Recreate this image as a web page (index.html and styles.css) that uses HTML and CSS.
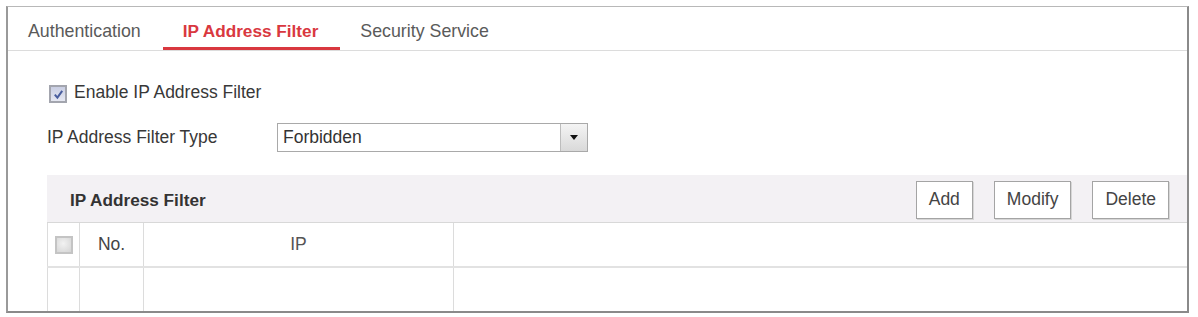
FILE: index.html
```html
<!DOCTYPE html>
<html lang="en">
<head>
    <meta charset="UTF-8">
    <title>IP Address Filter</title>
    <link rel="stylesheet" href="styles.css">
</head>
<body>
    <div class="frame">
        <!-- Tabs -->
        <div class="tabs">
            <span class="tab">Authentication</span>
            <span class="tab active">IP Address Filter</span>
            <span class="tab">Security Service</span>
        </div>

        <div class="content">
            <label class="check-row">
                <span class="check checked">
                    <svg width="11" height="11" viewBox="0 0 11 11"><path d="M1.8 5.6 L4.4 8.6 L9.2 1.8" fill="none" stroke="#4a5e9e" stroke-width="2"/></svg>
                </span>
                Enable IP Address Filter
            </label>

            <div class="field-row">
                <span class="field-label">IP Address Filter Type</span>
                <div class="select">
                    <span class="select-value">Forbidden</span>
                    <span class="select-arrow"><span class="arrow"></span></span>
                </div>
            </div>

            <!-- Filter list -->
            <div class="list">
                <div class="list-head">
                    <span class="list-title">IP Address Filter</span>
                    <div class="actions">
                        <button class="btn">Add</button>
                        <button class="btn">Modify</button>
                        <button class="btn">Delete</button>
                    </div>
                </div>
                <table class="grid">
                    <tr class="grid-head">
                        <td class="col-check"><span class="check disabled"></span></td>
                        <td class="col-no">No.</td>
                        <td class="col-ip">IP</td>
                        <td></td>
                    </tr>
                    <tr class="grid-row">
                        <td></td>
                        <td></td>
                        <td></td>
                        <td></td>
                    </tr>
                </table>
            </div>
        </div>
    </div>
</body>
</html>
```

FILE: styles.css
```css
body {
    margin: 0;
    padding: 6px 0 0 6px;
    font-family: "Liberation Sans", Arial, sans-serif;
    font-size: 17.5px;
    color: #383838;
    background-color: #fff;
}

.frame {
    box-sizing: border-box;
    width: 1183px;
    height: 307px;
    border: 1px solid #b8b8b8;
    border-left: 2px solid #9a9a9a;
    border-right: 2px solid #8a8a8a;
    border-bottom: 2px solid #8a8a8a;
    overflow: hidden;
}

/* Tabs */
.tabs {
    display: flex;
    border-bottom: 1px solid #dcdcdc;
}

.tab {
    box-sizing: border-box;
    height: 43px;
    padding: 9px 22px 0 20px;
    line-height: 31px;
    font-size: 17.8px;
    color: #5a5a5a;
    border-bottom: 3px solid transparent;
}

.tab.active {
    font-size: 17.2px;
    font-weight: bold;
    color: #d9383f;
    border-bottom-color: #d9383f;
}

.content {
    padding: 29px 0 0 39px;
}

/* Checkboxes */
.check {
    box-sizing: border-box;
    display: inline-flex;
    justify-content: center;
    align-items: center;
    width: 18px;
    height: 18px;
}

.check.checked {
    border: 2px solid #a3a5ae;
    background: linear-gradient(#c9cee3, #e6e8f2);
}

.check.disabled {
    border: 2px solid #c4c4c4;
    background: radial-gradient(circle at 45% 40%, #f2f2f2, #d4d4d4);
}

.check-row {
    display: flex;
    height: 24px;
    line-height: 24px;
}

.check-row .check {
    margin: 5px 7px 0 2px;
}

/* Filter type */
.field-row {
    display: flex;
    align-items: center;
    margin-top: 19px;
}

.field-label {
    width: 230px;
}

.select {
    box-sizing: border-box;
    display: flex;
    width: 311px;
    height: 29px;
    border: 1px solid #a9a9a9;
    background-color: #fff;
}

.select-value {
    flex: 1;
    padding-left: 5px;
    line-height: 27px;
    color: #333;
}

.select-arrow {
    display: flex;
    justify-content: center;
    align-items: center;
    width: 26px;
    border-left: 1px solid #bdbdbd;
    background: linear-gradient(#f4f4f4, #d9d9d9);
}

.arrow {
    width: 0;
    height: 0;
    border-left: 4px solid transparent;
    border-right: 4px solid transparent;
    border-top: 5px solid #111;
}

/* List */
.list {
    margin-top: 23px;
}

.list-head {
    box-sizing: border-box;
    display: flex;
    align-items: center;
    justify-content: space-between;
    height: 48px;
    padding: 2px 18px 0 23px;
    background-color: #f3f1f4;
    border-bottom: 1px solid #d8d8d8;
}

.list-title {
    font-size: 17.2px;
    font-weight: bold;
    color: #333;
    padding-top: 2px;
}

.actions {
    display: flex;
    gap: 21px;
}

.btn {
    height: 38px;
    padding: 0 12px;
    font-family: "Liberation Sans", Arial, sans-serif;
    font-size: 17.5px;
    color: #444;
    background-color: #fff;
    border: 1px solid #a4a4a4;
    box-shadow: 1px 1px 0 #d6d6d6;
    cursor: pointer;
}

.grid {
    width: 100%;
    border-collapse: collapse;
    table-layout: fixed;
}

.grid td {
    border-left: 1px solid #dcdcdc;
    border-bottom: 2px solid #e2e2e2;
    padding: 0;
    text-align: center;
}

.grid-head td {
    height: 43px;
}

.grid-row td {
    height: 50px;
}

.col-check {
    width: 31px;
}

.col-check .check {
    vertical-align: middle;
}

.col-no {
    width: 63px;
    color: #444;
}

.col-ip {
    width: 309px;
    color: #555;
}
```
